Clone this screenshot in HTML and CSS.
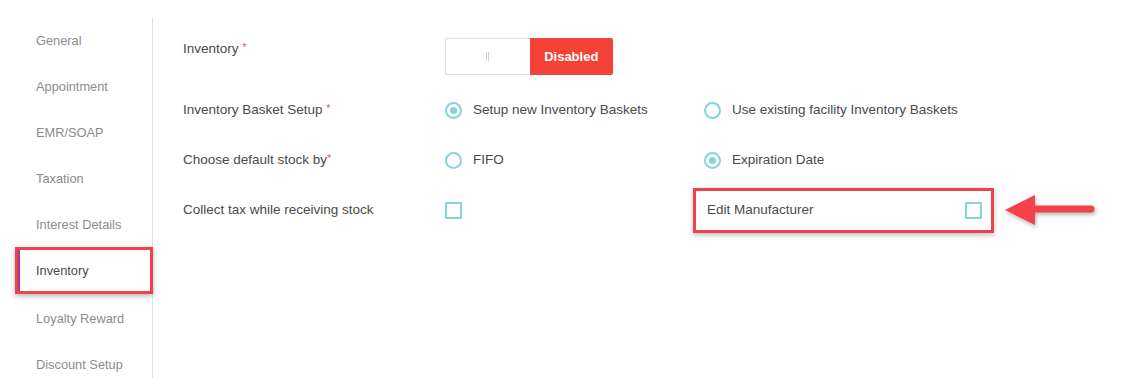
FILE: index.html
```html
<!DOCTYPE html>
<html lang="en">
  <head>
    <meta charset="UTF-8" />
    <meta name="viewport" content="width=device-width, initial-scale=1.0" />
    <title>Settings | Inventory</title>
    <link rel="stylesheet" href="styles.css">
  </head>
  <body>
    <div class="page">
      <!-- Settings menu -->
      <nav class="side-nav">
        <a class="nav-item">General</a>
        <a class="nav-item">Appointment</a>
        <a class="nav-item">EMR/SOAP</a>
        <a class="nav-item">Taxation</a>
        <a class="nav-item">Interest Details</a>
        <a class="nav-item active">Inventory</a>
        <a class="nav-item">Loyalty Reward</a>
        <a class="nav-item">Discount Setup</a>
      </nav>

      <!-- Inventory settings -->
      <main class="settings">
        <div class="row row-top">
          <div class="label">Inventory <span class="req">*</span></div>
          <div class="toggle">
            <span class="toggle-off"><i class="grip"></i></span>
            <span class="toggle-on">Disabled</span>
          </div>
        </div>

        <div class="row">
          <div class="label">Inventory Basket Setup <span class="req">*</span></div>
          <label class="option"><span class="radio checked"></span>Setup new Inventory Baskets</label>
          <label class="option"><span class="radio"></span>Use existing facility Inventory Baskets</label>
        </div>

        <div class="row">
          <div class="label">Choose default stock by<span class="req">*</span></div>
          <label class="option"><span class="radio"></span>FIFO</label>
          <label class="option"><span class="radio checked"></span>Expiration Date</label>
        </div>

        <div class="row">
          <div class="label">Collect tax while receiving stock</div>
          <label class="option"><span class="check"></span></label>
          <label class="option highlight">Edit Manufacturer<span class="check"></span></label>
          <svg class="arrow" width="100" height="40" viewBox="0 0 100 40" aria-hidden="true">
            <line x1="30" y1="19" x2="88" y2="19" stroke="#f4424a" stroke-width="7" stroke-linecap="round"/>
            <polygon points="2,20 32,5 32,35" fill="#f4424a"/>
          </svg>
        </div>
      </main>
    </div>
  </body>
</html>
```

FILE: styles.css
```css
/* ---------- Reset & Base ---------- */
*{box-sizing:border-box;margin:0;padding:0;}
html,body{height:100%;background:#fff;font-family:"Liberation Sans",Arial,sans-serif;font-size:13px;color:#4a4a4a;}

/* ---------- Layout ---------- */
.page{display:flex;align-items:flex-start;height:100%;padding-top:18px;overflow:hidden;}

/* ---------- Side nav ---------- */
.side-nav{width:153px;flex:none;border-right:1px solid #e2e2e2;min-height:400px;display:flex;flex-direction:column;}
.nav-item{position:relative;display:flex;align-items:center;height:46px;padding:1px 0 0 36px;color:#8c8c8c;line-height:1;font-size:12.8px;}
.nav-item.active{color:#4a4a4a;margin-bottom:2px;}
.nav-item.active::before{content:"";position:absolute;left:18px;top:2px;bottom:2px;width:2px;background:#9b3f8c;}
/* annotation box */
.nav-item.active::after{content:"";position:absolute;left:15px;right:-1px;top:-1px;bottom:0;border:3px solid #f2414a;box-shadow:0 2px 5px rgba(0,0,0,.3);}

/* ---------- Settings rows ---------- */
.settings{flex:1;padding:20px 0 0 30px;font-size:13.5px;}
.row{position:relative;display:grid;grid-template-columns:262px 259px 290px;align-items:center;height:50px;}
.row-top{align-items:start;height:47px;}
.row-top .label{margin-top:1px;}
.label{line-height:20px;}
.req{color:#f05a5a;font-size:11px;vertical-align:top;line-height:16px;}

.option{display:flex;align-items:center;gap:11px;line-height:20px;}

.radio{width:17px;height:17px;border:2px solid #82d4de;border-radius:50%;display:flex;align-items:center;justify-content:center;flex:none;}
.radio.checked::after{content:"";width:7px;height:7px;border-radius:50%;background:#82d4de;}
.check{width:17px;height:17px;border:2px solid #82d4de;border-radius:1px;flex:none;}

/* ---------- Toggle ---------- */
.toggle{display:flex;width:168px;height:37px;}
.toggle-off{flex:1;display:flex;align-items:center;justify-content:center;border:1px solid #e0e0e0;border-right:none;border-radius:2px 0 0 2px;}
.grip{width:3px;height:9px;border-left:1px solid #cfcfcf;border-right:1px solid #cfcfcf;}
.toggle-on{flex:1;display:flex;align-items:center;justify-content:center;background:#f44236;color:#fff;font-weight:700;font-size:13px;border-radius:0 2px 2px 0;}

/* ---------- Annotation ---------- */
.highlight{justify-content:space-between;margin-left:-11px;width:301px;height:45px;padding:0 11px;border:3px solid #f2414a;box-shadow:0 2px 5px rgba(0,0,0,.25);}
.highlight .check{margin-right:-2px;}
.arrow{position:absolute;left:820px;top:5px;filter:drop-shadow(1px 2px 2px rgba(0,0,0,.3));}
```
